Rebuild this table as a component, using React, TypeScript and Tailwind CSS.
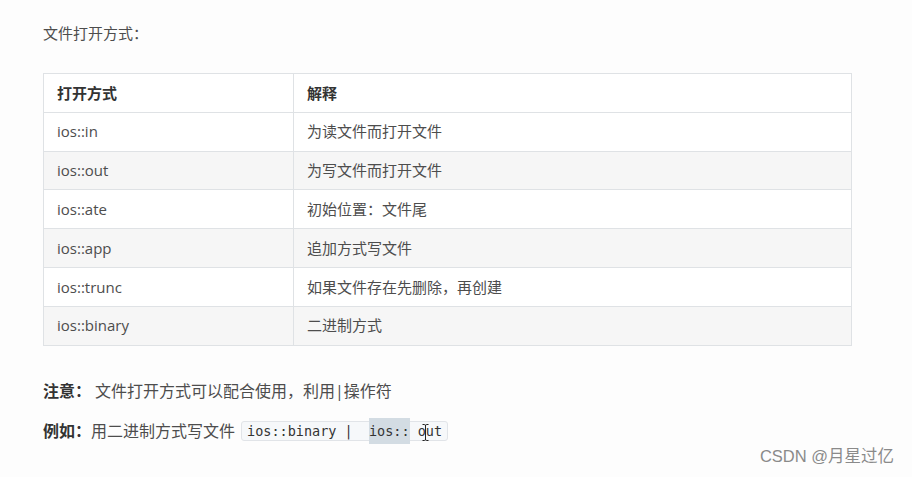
import React from "react";

const rows = [
  { mode: "ios::in", desc: "为读文件而打开文件" },
  { mode: "ios::out", desc: "为写文件而打开文件" },
  { mode: "ios::ate", desc: "初始位置：文件尾" },
  { mode: "ios::app", desc: "追加方式写文件" },
  { mode: "ios::trunc", desc: "如果文件存在先删除，再创建" },
  { mode: "ios::binary", desc: "二进制方式" },
];

const App: React.FC = () => {
  return (
    <div
      className="relative w-[912px] h-[477px] bg-[#fdfdfd] text-[#4d4d4d] text-[15px] overflow-hidden"
      style={{ fontFamily: '"Open Sans", "Noto Sans CJK SC", sans-serif' }}
    >
      <div className="pl-[43px] pt-[20px]">
        <p className="leading-[26px]">文件打开方式：</p>

        <table className="mt-[27px] w-[809px] border-collapse border border-[#dfe2e5] table-fixed">
          <thead>
            <tr className="h-[38.8px] bg-white">
              <th className="w-[250px] border border-[#dfe2e5] px-[13px] text-left font-bold text-[#333]">
                打开方式
              </th>
              <th className="border border-[#dfe2e5] px-[13px] text-left font-bold text-[#333]">
                解释
              </th>
            </tr>
          </thead>
          <tbody>
            {rows.map((row, index) => (
              <tr
                key={row.mode}
                className={
                  index % 2 === 0 ? "h-[38.8px] bg-white" : "h-[38.8px] bg-[#f6f6f6]"
                }
              >
                <td className="border border-[#dfe2e5] px-[13px]">{row.mode}</td>
                <td className="border border-[#dfe2e5] px-[13px]">{row.desc}</td>
              </tr>
            ))}
          </tbody>
        </table>

        <p className="mt-[32px] leading-[26px] text-[16px]">
          <span className="font-bold text-[#333]">注意：</span>
          <span className="ml-[4px]">文件打开方式可以配合使用，利用|操作符</span>
        </p>
        <p className="mt-[14px] leading-[26px] text-[16px] flex items-center">
          <span className="font-bold text-[#333]">例如：</span>
          <span>用二进制方式写文件</span>
          <code
            className="relative ml-[6px] inline-flex items-center h-[20px] px-[5px] rounded-[3px] border border-[#e1e4e8] bg-[#f6f8fa] text-[13.5px] text-[#333]"
            style={{ fontFamily: '"DejaVu Sans Mono", monospace' }}
          >
            <span className="whitespace-pre">ios::binary |  </span>
            <span className="whitespace-pre bg-[#d3dce3]">ios::</span>
            <span className="whitespace-pre"> out</span>
            <svg
              className="absolute right-[18px] top-[2px]"
              width="7"
              height="17"
              viewBox="0 0 7 17"
            >
              <path
                d="M0.5 0.5 H2.5 Q3.5 0.5 3.5 2 V15 Q3.5 16.5 2.5 16.5 H0.5 M6.5 0.5 H4.5 Q3.5 0.5 3.5 2 M3.5 15 Q3.5 16.5 4.5 16.5 H6.5"
                fill="none"
                stroke="#222"
                strokeWidth="1"
              />
            </svg>
          </code>
        </p>
      </div>

      <div
        className="absolute right-[18px] bottom-[8px] text-[16.5px] text-[#8a8a8a]"
        style={{ fontFamily: '"Liberation Sans", "Noto Sans CJK SC", sans-serif' }}
      >
        CSDN @月星过亿
      </div>
    </div>
  );
};

export default App;
